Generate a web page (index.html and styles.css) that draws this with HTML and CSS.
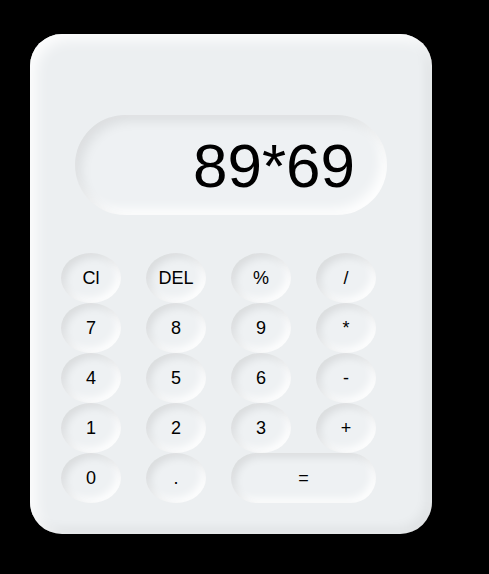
FILE: index.html
```html
<!DOCTYPE html>
<html>
<head>
<meta charset="utf-8">
<link rel="stylesheet" href="styles.css">
</head>
<body>
<div class="calc">
  <div class="display">89*69</div>
  <div class="keys">
    <button class="key">Cl</button>
    <button class="key">DEL</button>
    <button class="key">%</button>
    <button class="key">/</button>
    <button class="key">7</button>
    <button class="key">8</button>
    <button class="key">9</button>
    <button class="key">*</button>
    <button class="key">4</button>
    <button class="key">5</button>
    <button class="key">6</button>
    <button class="key">-</button>
    <button class="key">1</button>
    <button class="key">2</button>
    <button class="key">3</button>
    <button class="key">+</button>
    <button class="key">0</button>
    <button class="key">.</button>
    <button class="key key-wide">=</button>
  </div>
</div>
</body>
</html>
```
FILE: styles.css
```css
html, body {
  margin: 0;
  background: #000;
}
body {
  padding: 34px 0 0 30px;
  font-family: "Liberation Sans", Arial, sans-serif;
}
.calc {
  width: 402px;
  height: 500px;
  box-sizing: border-box;
  background: #eceff1;
  border-radius: 32px;
  padding: 81px 0 0 31px;
  box-shadow: inset 6px 6px 14px rgba(255,255,255,0.9), inset -5px -5px 12px rgba(0,0,0,0.06);
}
.display {
  margin-left: 14px;
  width: 312px;
  height: 100px;
  box-sizing: border-box;
  border-radius: 50px;
  padding-right: 32px;
  display: flex;
  align-items: center;
  justify-content: flex-end;
  font-size: 62px;
  color: #000;
  background: #eef1f3;
  box-shadow: inset 6px 6px 12px rgba(0,0,0,0.08), inset -6px -6px 12px rgba(255,255,255,0.95);
}
.keys {
  margin-top: 38px;
  display: grid;
  grid-template-columns: repeat(4, 60px);
  grid-auto-rows: 50px;
  column-gap: 25px;
}
.key {
  border: none;
  padding: 0;
  margin: 0;
  font-family: "Liberation Sans", Arial, sans-serif;
  font-size: 18px;
  color: #000;
  border-radius: 50%;
  background: #eef1f3;
  box-shadow: inset 4px 4px 9px rgba(0,0,0,0.09), inset -4px -4px 9px rgba(255,255,255,0.95);
}
.key-wide {
  grid-column: span 2;
  border-radius: 28px;
}
```
